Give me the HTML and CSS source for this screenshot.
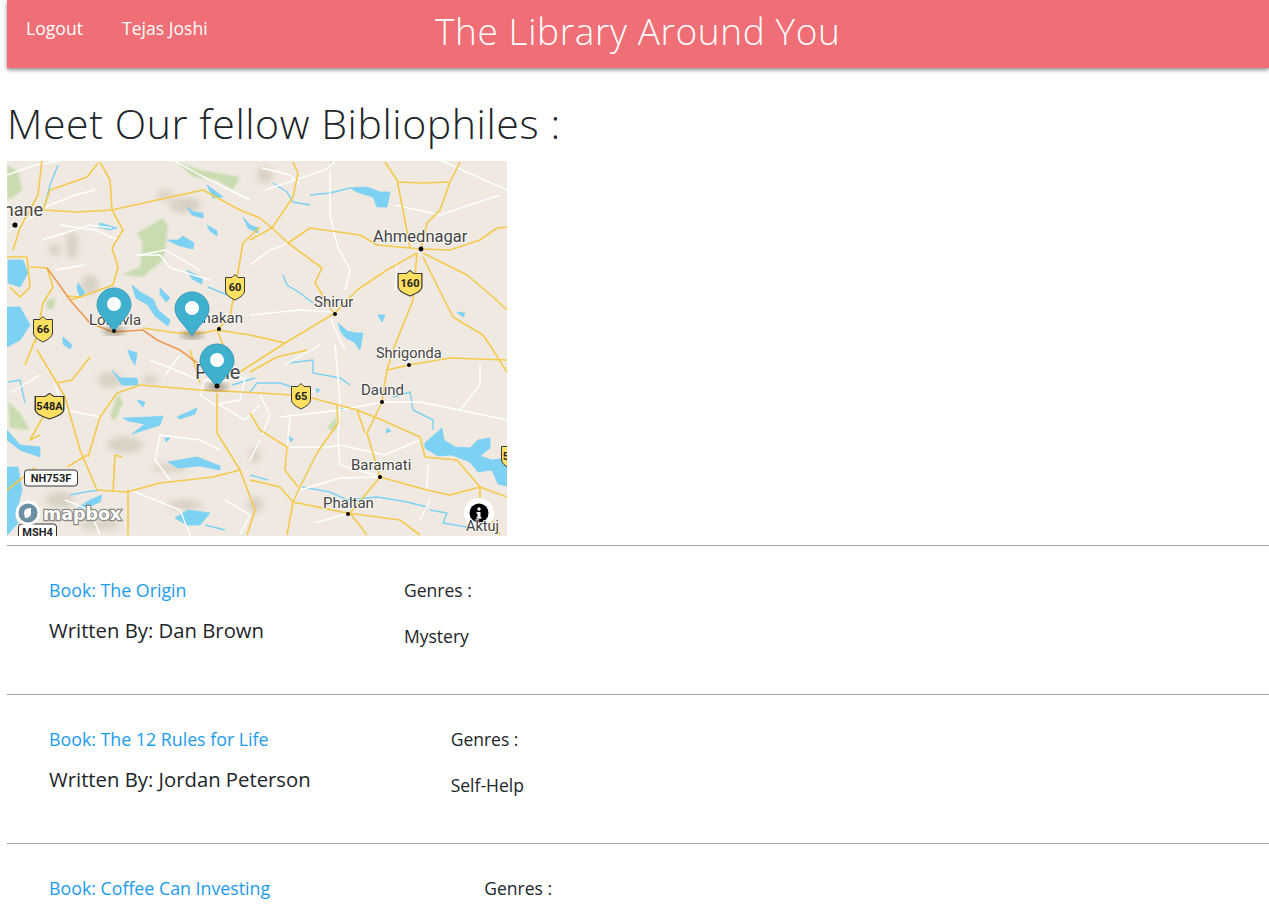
FILE: index.html
```html
<!DOCTYPE html>
<html lang="en">
<head>
  <meta charset="UTF-8">
  <meta name="viewport" content="width=device-width, initial-scale=1.0">
  <title>The Library Around You</title>
  <link rel="stylesheet" href="styles.css">
</head>
<body>
  <nav class="navbar">
    <div class="nav-links">
      <a href="#">Logout</a>
      <a href="#">Tejas Joshi</a>
    </div>
    <div class="nav-title">The Library Around You</div>
  </nav>

  <h2 class="page-title">Meet Our fellow Bibliophiles :</h2>

  <svg class="map" viewBox="7 161 500 375" width="500" height="375">
    <defs>
      <filter id="soft"><feGaussianBlur stdDeviation="3"></feGaussianBlur></filter>
      <filter id="softer"><feGaussianBlur stdDeviation="0.8"></feGaussianBlur></filter>
      <path id="shield" d="M-9.5,-9.5 L-3,-9.5 L0,-12.5 L3,-9.5 L9.5,-9.5 L9.5,4 Q9.5,8.5 0,13 Q-9.5,8.5 -9.5,4 Z"></path>
      <path id="pin" d="M0,0 C-3,-7 -17,-17 -17,-27 A17,17 0 1 1 17,-27 C17,-17 3,-7 0,0 Z"></path>
    </defs>

    <rect x="7" y="161" width="500" height="375" fill="#efe9e1"></rect>

    <!-- hill shading -->
    <g class="hills" filter="url(#soft)">
      <ellipse cx="72" cy="245" rx="6" ry="14"></ellipse>
      <ellipse cx="90" cy="285" rx="9" ry="10"></ellipse>
      <ellipse cx="55" cy="250" rx="6" ry="6"></ellipse>
      <ellipse cx="185" cy="205" rx="16" ry="8"></ellipse>
      <ellipse cx="165" cy="195" rx="8" ry="5"></ellipse>
      <ellipse cx="110" cy="380" rx="12" ry="8"></ellipse>
      <ellipse cx="125" cy="445" rx="18" ry="8"></ellipse>
      <ellipse cx="170" cy="468" rx="18" ry="4"></ellipse>
      <ellipse cx="185" cy="505" rx="18" ry="5"></ellipse>
      <ellipse cx="150" cy="380" rx="8" ry="5"></ellipse>
      <ellipse cx="60" cy="500" rx="14" ry="8"></ellipse>
      <ellipse cx="100" cy="525" rx="20" ry="5"></ellipse>
      <ellipse cx="265" cy="175" rx="8" ry="8"></ellipse>
      <ellipse cx="255" cy="505" rx="8" ry="8"></ellipse>
      <ellipse cx="255" cy="455" rx="5" ry="8"></ellipse>
    </g>

    <!-- green patches -->
    <g class="green" filter="url(#softer)">
      <path d="M137,233 L163,218 L168,227 L163,260 L143,277 L122,275 L140,267 L143,243 Z"></path>
      <path d="M177,162 L200,170 L240,177 L233,190 L217,180 L193,177 Z"></path>
      <path d="M7,165 L18,172 L22,190 L12,198 L7,198 Z"></path>
      <path d="M8,402 L20,413 L30,430 L10,428 Z"></path>
      <path d="M110,417 L118,393 L123,403 L115,420 Z"></path>
      <path d="M327,427 L337,417 L335,432 Z"></path>
      <path d="M47,300 L56,298 L53,310 L46,308 Z"></path>
    </g>

    <!-- water -->
    <g class="water">
      <path d="M7,467 L18,467 L22,490 L15,517 L18,523 L7,535 Z"></path>
      <path d="M7,430 L20,445 L40,447 L40,457 L20,450 L7,440 Z"></path>
      <path d="M8,260 L23,260 L28,273 L20,287 L8,283 Z"></path>
      <path d="M7,307 L20,307 L30,325 L20,340 L7,347 Z"></path>
      <path d="M100,223 L117,228 L110,230 L98,227 Z"></path>
      <path d="M207,185 L223,197 L213,198 Z"></path>
      <path d="M187,207 L194,212 L203,213 L203,218 L192,215 Z"></path>
      <path d="M243,217 L250,225 L258,228 L258,233 L248,228 Z"></path>
      <path d="M207,225 L217,231 L217,236 L210,231 Z"></path>
      <path d="M167,240 L178,240 L183,236 L194,243 L193,249 L180,246 Z"></path>
      <path d="M132,285 L140,292 L153,299 L158,310 L170,320 L168,326 L155,316 L148,305 L136,298 Z"></path>
      <path d="M160,288 L170,298 L166,302 L160,294 Z"></path>
      <path d="M187,270 L202,278 L202,284 L192,279 Z"></path>
      <path d="M78,283 L85,293 L80,297 L77,288 Z"></path>
      <path d="M63,337 L72,345 L70,349 L63,344 Z"></path>
      <path d="M350,188 L367,187 L380,192 L390,192 L387,207 L377,207 L373,197 L357,192 Z"></path>
      <path d="M378,315 L385,315 L382,322 Z"></path>
      <path d="M338,323 L347,331 L356,333 L363,333 L360,350 L354,342 L346,338 L341,332 Z"></path>
      <path d="M457,312 L465,313 L463,317 Z"></path>
      <path d="M425,443 L442,428 L444,440 L455,447 L470,448 L478,440 L490,438 L490,448 L480,456 L492,460 L507,458 L507,486 L498,484 L492,470 L478,472 L470,462 L452,455 L438,456 L425,448 Z"></path>
      <path d="M123,418 L150,417 L163,416 L160,425 L132,434 L145,424 L128,421 Z"></path>
      <path d="M112,370 L120,378 L137,378 L138,385 L122,385 Z"></path>
      <path d="M168,462 L197,457 L220,466 L220,470 L200,466 L178,468 Z"></path>
      <path d="M175,518 L188,510 L210,513 L200,525 L187,525 Z"></path>
      <path d="M177,417 L197,408 L195,414 L180,419 Z"></path>
      <path d="M137,400 L145,402 L143,407 Z"></path>
      <path d="M128,350 L137,353 L135,365 L130,357 Z"></path>
      <path d="M387,428 L391,431 L386,433 Z"></path>
      <path d="M288,436 L293,439 L291,442 Z"></path>
      <path d="M316,388 L320,390 L317,393 Z"></path>
      <path d="M340,408 L345,409 L342,411 Z"></path>
      <path d="M165,438 L170,438 L166,442 Z"></path>
      <path d="M78,508 L90,500 L102,495 L100,502 L86,508 Z"></path>
    </g>
    <g class="streams">
      <path d="M58,165 L50,185 L45,205"></path>
      <path d="M273,183 L287,192 L293,202 L310,205"></path>
      <path d="M310,195 L330,193 L350,188"></path>
      <path d="M283,275 L287,285 L300,293 L313,303"></path>
      <path d="M250,392 L257,383 L280,383 L292,387"></path>
      <path d="M288,363 L313,360 L313,373 L340,378 L350,385"></path>
      <path d="M393,397 L410,392 L413,410 L433,420 L433,430"></path>
      <path d="M302,487 L330,492 L347,500 L377,497 L407,502 L427,507"></path>
      <path d="M430,510 L447,513 L443,523 L467,527 L490,523"></path>
      <path d="M8,382 L20,380 L25,403"></path>
      <path d="M70,495 L85,492 L100,490"></path>
      <path d="M208,287 L235,298"></path>
      <path d="M250,475 L268,480"></path>
      <path d="M232,385 L255,378"></path>
      <path d="M205,525 L225,530"></path>
    </g>

    <!-- minor roads -->
    <g class="roads-white">
      <path d="M7,232 L35,215 L50,205 L75,195 L95,190"></path>
      <path d="M42,240 L90,225 L112,228"></path>
      <path d="M55,270 L85,265"></path>
      <path d="M135,255 L160,255 L170,268 L210,280"></path>
      <path d="M140,255 L165,250 L200,270"></path>
      <path d="M7,175 L35,165 L60,161"></path>
      <path d="M60,225 L95,230 L118,240"></path>
      <path d="M175,161 L200,175 L250,200"></path>
      <path d="M262,168 L290,175 L300,185"></path>
      <path d="M265,190 L325,170 L335,162"></path>
      <path d="M330,170 L330,215 L337,245 L350,270 L345,290"></path>
      <path d="M250,265 L270,250 L288,243"></path>
      <path d="M395,205 L440,215 L500,195"></path>
      <path d="M440,160 L507,190"></path>
      <path d="M397,262 L395,290"></path>
      <path d="M250,315 L300,310 L333,312"></path>
      <path d="M330,318 L345,350"></path>
      <path d="M335,345 L340,400 L338,440 L340,465"></path>
      <path d="M280,417 L340,410 L382,402"></path>
      <path d="M290,417 L285,470"></path>
      <path d="M290,447 L330,447 L340,445 L385,455 L420,440"></path>
      <path d="M340,465 L375,475"></path>
      <path d="M300,490 L340,478 L380,477"></path>
      <path d="M315,523 L350,513"></path>
      <path d="M385,402 L420,402 L460,410 L507,420"></path>
      <path d="M460,410 L480,385 L480,365"></path>
      <path d="M427,490 L428,465"></path>
      <path d="M420,520 L430,500"></path>
      <path d="M160,435 L200,440 L220,450"></path>
      <path d="M160,435 L155,460 L170,480"></path>
      <path d="M100,417 L65,410 L55,385"></path>
      <path d="M10,393 L40,375"></path>
      <path d="M130,490 L180,510 L190,535"></path>
      <path d="M225,500 L250,515 L240,535"></path>
      <path d="M65,500 L90,510 L100,535"></path>
      <path d="M150,360 L200,380"></path>
      <path d="M260,440 L250,460"></path>
      <path d="M180,355 L165,375"></path>
      <path d="M220,405 L245,420 L260,405"></path>
      <path d="M225,380 L245,378 L240,400 L215,405 L200,395 L205,380 Z"></path>
      <path d="M260,395 L270,415 L262,435"></path>
      <path d="M285,365 L320,345"></path>
    </g>

    <!-- main roads -->
    <g class="roads-yellow">
      <path d="M42,160 L38,195 L20,228 L13,250"></path>
      <path d="M100,162 L110,180 L112,210 L123,230 L112,248 L118,267 L113,285 L80,297 L70,300"></path>
      <path d="M98,163 L87,177 L50,190 L43,210 L77,212 L112,210 L157,200 L203,190 L240,210 L260,218 L272,228"></path>
      <path d="M230,317 L243,243 L260,227"></path>
      <path d="M421,249 L450,250 L480,240 L497,228 L507,227"></path>
      <path d="M421,249 L427,223 L440,210 L450,182 L460,162"></path>
      <path d="M410,248 L403,210 L397,180 L385,162"></path>
      <path d="M397,182 L423,183 L450,182"></path>
      <path d="M421,249 L377,245 L360,235 L310,228 L288,243 L272,228 L293,197 L298,173 L293,162"></path>
      <path d="M272,228 L250,240"></path>
      <path d="M288,243 L322,268 L315,283 L333,312"></path>
      <path d="M417,253 L387,270 L357,290 L335,313 L285,343 L250,335 L217,330"></path>
      <path d="M417,253 L413,300 L393,350 L387,370"></path>
      <path d="M423,253 L467,275 L493,297 L507,310"></path>
      <path d="M423,257 L443,297 L453,317 L483,335 L493,350 L507,372"></path>
      <path d="M143,328 L177,333 L203,333 L217,330 L230,317"></path>
      <path d="M217,330 L225,350 L218,375"></path>
      <path d="M285,343 L240,372"></path>
      <path d="M140,385 L200,390 L260,393 L292,395 L312,398 L357,410 L382,420 L420,437 L425,457 L457,460 L480,487 L507,497"></path>
      <path d="M382,402 L370,427 L367,433 L380,477"></path>
      <path d="M357,410 L365,433"></path>
      <path d="M409,365 L387,370 L383,393 L382,402"></path>
      <path d="M409,365 L450,358 L507,360"></path>
      <path d="M250,372 L277,357 L307,350"></path>
      <path d="M337,405 L338,423 L317,453 L300,487 L293,502 L287,535"></path>
      <path d="M250,413 L260,430 L287,447 L285,470 L298,487"></path>
      <path d="M250,480 L280,487 L293,502 L347,513 L400,520 L420,535"></path>
      <path d="M380,477 L350,513 L367,535"></path>
      <path d="M380,477 L427,490 L450,495 L480,487 L480,500 L500,535"></path>
      <path d="M217,393 L217,433 L240,470 L213,477 L160,483 L127,492 L97,490 L80,450 L65,397 L57,383 L37,350"></path>
      <path d="M57,383 L72,380 L90,357"></path>
      <path d="M87,455 L67,467"></path>
      <path d="M140,385 L117,393 L100,417 L88,457"></path>
      <path d="M115,455 L113,492 M115,455 L122,457"></path>
      <path d="M128,490 L128,535"></path>
      <path d="M240,470 L255,510 L247,535"></path>
      <path d="M190,350 L200,383"></path>
      <path d="M43,417 L30,440 L40,435"></path>
      <path d="M7,257 L27,257 L30,287 L20,297 L10,287"></path>
      <path d="M30,267 L47,268 L53,287 L43,303 L35,343"></path>
      <path d="M67,296 L80,297"></path>
      <path d="M7,490 L35,468"></path>
      <path d="M35,340 L25,365"></path>
    </g>
    <path class="road-orange" d="M47,268 L58,283 L70,300 L90,323 L113,332 L143,330 L157,340 L180,350 L200,365 L215,380"></path>

    <!-- towns -->
    <g class="labels">
      <text x="43" y="216" text-anchor="end" font-size="18">Thane</text>
      <text x="373" y="242" font-size="16.500">Ahmednagar</text>
      <text x="314" y="307" font-size="15">Shirur</text>
      <text x="89" y="325" font-size="15">Lonavla</text>
      <text x="243" y="323" text-anchor="end" font-size="15">Chakan</text>
      <text x="195" y="379" font-size="20">Pune</text>
      <text x="376" y="358" font-size="14.500">Shrigonda</text>
      <text x="361" y="395" font-size="15">Daund</text>
      <text x="351" y="470" font-size="15">Baramati</text>
      <text x="323" y="508" font-size="15">Phaltan</text>
    </g>
    <g class="dots">
      <circle cx="15" cy="225" r="2.600"></circle>
      <circle cx="421" cy="249" r="2.400"></circle>
      <circle cx="335" cy="314" r="2"></circle>
      <circle cx="219" cy="329" r="2"></circle>
      <circle cx="409" cy="365" r="2"></circle>
      <circle cx="382" cy="402" r="2"></circle>
      <circle cx="380" cy="477" r="2"></circle>
      <circle cx="348" cy="514" r="2"></circle>
    </g>

    <!-- highway shields -->
    <g class="shields">
      <g transform="translate(235,287)"><use href="#shield"></use><text y="4">60</text></g>
      <g transform="translate(43,329)"><use href="#shield"></use><text y="4">66</text></g>
      <g transform="translate(301,396)"><use href="#shield"></use><text y="4">65</text></g>
      <g transform="translate(410,283)"><use href="#shield" transform="scale(1.25,1)"></use><text y="4">160</text></g>
      <g transform="translate(49.500,406)"><use href="#shield" transform="scale(1.5,1)"></use><text y="4">548A</text></g>
      <g transform="translate(511,456)"><use href="#shield"></use><text x="-5" y="4">5</text></g>
    </g>
    <g class="plates">
      <rect x="24.500" y="470" width="53" height="16" rx="3"></rect>
      <text x="51" y="482">NH753F</text>
      <rect x="18.500" y="524" width="38" height="16" rx="3"></rect>
      <text x="37.500" y="536">MSH4</text>
    </g>

    <!-- markers -->
    <g class="marker" transform="translate(114,332)">
      <ellipse class="marker-shadow" cx="0" cy="-1" rx="11" ry="4" filter="url(#soft)"></ellipse>
      <use href="#pin"></use><circle cy="-28" r="7"></circle>
    </g>
    <g class="marker" transform="translate(192,336)">
      <ellipse class="marker-shadow" cx="0" cy="-1" rx="11" ry="4" filter="url(#soft)"></ellipse>
      <use href="#pin"></use><circle cy="-28" r="7"></circle>
    </g>
    <g class="marker" transform="translate(217,388)">
      <ellipse class="marker-shadow" cx="0" cy="-1" rx="11" ry="4" filter="url(#soft)"></ellipse>
      <use href="#pin"></use><circle cy="-28" r="7"></circle>
    </g>
    <circle class="marker-dot" cx="217" cy="386" r="2.500"></circle>
    <circle class="marker-dot" cx="114" cy="331" r="2"></circle>

    <!-- map attribution -->
    <g class="mapbox-logo">
      <circle cx="28" cy="513" r="11" fill="#6c8fa3" stroke="#fff" stroke-width="3"></circle>
      <path d="M24,513 Q24,508 31,508 L31,513 Q31,518 25,518 Z" fill="#fff"></path>
      <text x="43" y="520">mapbox</text>
    </g>
    <circle cx="479" cy="513" r="15" fill="#fff"></circle>
    <circle cx="479" cy="513" r="9.500" fill="#000"></circle>
    <rect x="477.500" y="512" width="3" height="6.500" fill="#fff"></rect>
    <rect x="476.500" y="517" width="5" height="1.500" fill="#fff"></rect>
    <rect x="476.500" y="512" width="3" height="1.500" fill="#fff"></rect>
    <circle cx="479" cy="509" r="1.700" fill="#fff"></circle>
    <g class="labels"><text x="466" y="531" font-size="14.500">Aktuj</text></g>
  </svg>

  <section class="book">
    <div class="book-main">
      <a class="book-link" href="#">Book: The Origin</a>
      <p class="book-author">Written By: Dan Brown</p>
    </div>
    <div class="book-genres">
      <p class="genres-label">Genres :</p>
      <p class="genre">Mystery</p>
    </div>
  </section>

  <section class="book">
    <div class="book-main">
      <a class="book-link" href="#">Book: The 12 Rules for Life</a>
      <p class="book-author">Written By: Jordan Peterson</p>
    </div>
    <div class="book-genres">
      <p class="genres-label">Genres :</p>
      <p class="genre">Self-Help</p>
    </div>
  </section>

  <section class="book">
    <div class="book-main">
      <a class="book-link" href="#">Book: Coffee Can Investing</a>
      <p class="book-author">Written By: Saurabh Mukherjea</p>
    </div>
    <div class="book-genres">
      <p class="genres-label">Genres :</p>
      <p class="genre">Finance</p>
    </div>
  </section>
</body>
</html>
```

FILE: styles.css
```css
html, body {
  height: 100%;
  overflow: hidden;
}

body {
  font-family: "Open Sans", "Noto Sans", sans-serif;
  margin: 0;
  padding-left: 7px;
  background-color: #fff;
  color: #212529;
}

a {
  text-decoration: none;
}

p {
  margin: 0;
}

.navbar {
  position: relative;
  display: flex;
  align-items: center;
  height: 68px;
  background-color: #f06e75;
  box-shadow: 0 2px 4px rgba(0, 0, 0, 0.45);
}

.nav-links {
  display: flex;
  gap: 39px;
  padding-left: 19px;
  margin-top: -12px;
  font-size: 17.6px;
}

.nav-links a {
  color: #fff;
}

.nav-title {
  position: absolute;
  left: 428px;
  top: 5px;
  font-size: 37px;
  font-weight: 300;
  letter-spacing: 0.6px;
  color: #fff;
}

.page-title {
  font-size: 41px;
  font-weight: 300;
  letter-spacing: 0.6px;
  line-height: 48px;
  margin: 31px 0 14px;
}

.map {
  display: block;
  margin-bottom: 9px;
}

.hills {
  fill: #b5ae98;
  opacity: 0.4;
}

.green {
  fill: #c9dcb0;
}

.water {
  fill: #7dd1f2;
  stroke: #7dd1f2;
  stroke-width: 0.8;
  stroke-linejoin: round;
}

.streams {
  fill: none;
  stroke: #7dd1f2;
  stroke-width: 1.4;
}

.roads-white {
  fill: none;
  stroke: #fff;
  stroke-width: 1.4;
}

.roads-yellow {
  fill: none;
  stroke: #f3ca4c;
  stroke-width: 1.6;
  stroke-linejoin: round;
}

.road-orange {
  fill: none;
  stroke: #ee9a52;
  stroke-width: 1.6;
}

.labels text {
  font-family: "Roboto", sans-serif;
  font-weight: 400;
  fill: #444;
  stroke: rgba(255, 255, 255, 0.75);
  stroke-width: 2px;
  paint-order: stroke;
}

.dots circle {
  fill: #000;
}

.shields use {
  fill: #ffe060;
  stroke: #3a3a3a;
  stroke-width: 1;
}

.shields text {
  font-family: "Roboto", sans-serif;
  font-size: 11px;
  font-weight: 700;
  text-anchor: middle;
  fill: #222;
}

.plates rect {
  fill: #fff;
  stroke: #333;
  stroke-width: 1;
}

.plates text {
  font-family: "Roboto", sans-serif;
  font-size: 11px;
  font-weight: 700;
  text-anchor: middle;
  fill: #222;
}

.marker use {
  fill: #3fb1ce;
  stroke: #3a9cb8;
  stroke-width: 1;
}

.marker circle {
  fill: #fff;
}

.marker-shadow {
  fill: #5b4a2c;
  opacity: 0.5;
}

.marker-dot {
  fill: #111;
}

.mapbox-logo text {
  font-family: "DejaVu Sans", sans-serif;
  font-size: 17.5px;
  font-weight: 700;
  fill: #fff;
  stroke: #8a8a85;
  stroke-width: 2.5px;
  paint-order: stroke;
}

.book {
  display: flex;
  gap: 140px;
  height: 148px;
  padding: 32px 42px 0;
  box-sizing: border-box;
  border-top: 1.5px solid #a5a5a5;
  margin-bottom: 1px;
}

.book-link {
  display: block;
  font-size: 17.8px;
  line-height: 24px;
  color: #1b9bef;
}

.book-author {
  font-size: 20.3px;
  line-height: 28px;
  margin-top: 14px;
  color: #212529;
}

.genres-label {
  font-size: 17.5px;
  line-height: 24px;
}

.genre {
  font-size: 17.5px;
  line-height: 24px;
  margin-top: 22px;
}
```
